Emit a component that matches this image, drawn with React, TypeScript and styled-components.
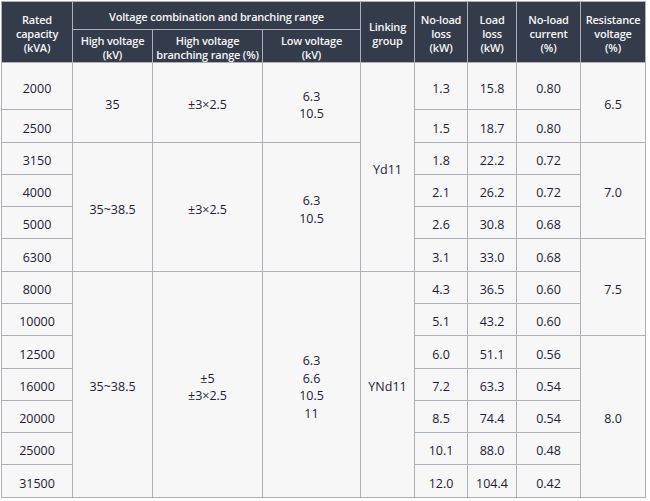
import React from "react";
import styled, { createGlobalStyle } from "styled-components";

const Global = createGlobalStyle`
  html, body { margin: 0; padding: 0; background: #ffffff; }
  body { font-family: "Open Sans", "Noto Sans", sans-serif; }
`;

const COLS = [70, 79, 109, 97, 53, 52, 48, 63, 64];
const ROWS = [27, 32, 46, 32, 31, 31, 31, 32, 31, 31, 32, 31, 31, 31, 32];

const Table = styled.div`
  display: grid;
  grid-template-columns: ${COLS.map((c) => `${c}px`).join(" ")};
  grid-template-rows: ${ROWS.map((r) => `${r}px`).join(" ")};
  gap: 1px;
  padding: 1px;
  margin: 1px;
  width: max-content;
  background: #aeb0b7;
`;

type Area = { r: number; c: number; rs?: number; cs?: number };

const Cell = styled.div<{ $r: number; $c: number; $rs: number; $cs: number }>`
  grid-row: ${(p) => p.$r} / span ${(p) => p.$rs};
  grid-column: ${(p) => p.$c} / span ${(p) => p.$cs};
  display: flex;
  flex-direction: column;
  align-items: center;
  justify-content: center;
  text-align: center;
  box-sizing: border-box;
`;

const HeadCell = styled(Cell)`
  background: #343c4b;
  color: #f4f5f7;
  font-size: 11px;
  font-weight: 600;
  line-height: 14px;
  letter-spacing: -0.2px;
  padding-top: 3px;
`;

const BodyCell = styled(Cell)`
  background: #f7f7f7;
  color: #1d2233;
  font-size: 12.5px;
  line-height: 17.5px;
  padding-top: 5px;
`;

const H = ({ r, c, rs = 1, cs = 1, children }: Area & { children: React.ReactNode }) => (
  <HeadCell $r={r} $c={c} $rs={rs} $cs={cs}>
    {children}
  </HeadCell>
);

const B = ({ r, c, rs = 1, cs = 1, lines }: Area & { lines: string[] }) => (
  <BodyCell $r={r} $c={c} $rs={rs} $cs={cs}>
    {lines.map((l, i) => (
      <span key={i}>{l}</span>
    ))}
  </BodyCell>
);

const rows: [string, string, string, string][] = [
  ["2000", "1.3", "15.8", "0.80"],
  ["2500", "1.5", "18.7", "0.80"],
  ["3150", "1.8", "22.2", "0.72"],
  ["4000", "2.1", "26.2", "0.72"],
  ["5000", "2.6", "30.8", "0.68"],
  ["6300", "3.1", "33.0", "0.68"],
  ["8000", "4.3", "36.5", "0.60"],
  ["10000", "5.1", "43.2", "0.60"],
  ["12500", "6.0", "51.1", "0.56"],
  ["16000", "7.2", "63.3", "0.54"],
  ["20000", "8.5", "74.4", "0.54"],
  ["25000", "10.1", "88.0", "0.48"],
  ["31500", "12.0", "104.4", "0.42"],
];

const merged: (Area & { lines: string[] })[] = [
  { r: 3, c: 2, rs: 2, lines: ["35"] },
  { r: 3, c: 3, rs: 2, lines: ["±3×2.5"] },
  { r: 3, c: 4, rs: 2, lines: ["6.3", "10.5"] },
  { r: 5, c: 2, rs: 4, lines: ["35~38.5"] },
  { r: 5, c: 3, rs: 4, lines: ["±3×2.5"] },
  { r: 5, c: 4, rs: 4, lines: ["6.3", "10.5"] },
  { r: 9, c: 2, rs: 7, lines: ["35~38.5"] },
  { r: 9, c: 3, rs: 7, lines: ["±5", "±3×2.5"] },
  { r: 9, c: 4, rs: 7, lines: ["6.3", "6.6", "10.5", "11"] },
  { r: 3, c: 5, rs: 6, lines: ["Yd11"] },
  { r: 9, c: 5, rs: 7, lines: ["YNd11"] },
  { r: 3, c: 9, rs: 2, lines: ["6.5"] },
  { r: 5, c: 9, rs: 3, lines: ["7.0"] },
  { r: 8, c: 9, rs: 3, lines: ["7.5"] },
  { r: 11, c: 9, rs: 5, lines: ["8.0"] },
];

export default function App() {
  return (
    <>
      <Global />
      <Table>
        <H r={1} c={1} rs={2}>
          <span>Rated</span>
          <span>capacity</span>
          <span>(kVA)</span>
        </H>
        <H r={1} c={2} cs={3}>
          <span>Voltage combination and branching range</span>
        </H>
        <H r={2} c={2}>
          <span>High voltage</span>
          <span>(kV)</span>
        </H>
        <H r={2} c={3}>
          <span>High voltage</span>
          <span>branching range (%)</span>
        </H>
        <H r={2} c={4}>
          <span>Low voltage</span>
          <span>(kV)</span>
        </H>
        <H r={1} c={5} rs={2}>
          <span>Linking</span>
          <span>group</span>
        </H>
        <H r={1} c={6} rs={2}>
          <span>No-load</span>
          <span>loss</span>
          <span>(kW)</span>
        </H>
        <H r={1} c={7} rs={2}>
          <span>Load</span>
          <span>loss</span>
          <span>(kW)</span>
        </H>
        <H r={1} c={8} rs={2}>
          <span>No-load</span>
          <span>current</span>
          <span>(%)</span>
        </H>
        <H r={1} c={9} rs={2}>
          <span>Resistance</span>
          <span>voltage</span>
          <span>(%)</span>
        </H>
        {rows.map((row, i) => (
          <React.Fragment key={row[0]}>
            <B r={i + 3} c={1} lines={[row[0]]} />
            <B r={i + 3} c={6} lines={[row[1]]} />
            <B r={i + 3} c={7} lines={[row[2]]} />
            <B r={i + 3} c={8} lines={[row[3]]} />
          </React.Fragment>
        ))}
        {merged.map((m, i) => (
          <B key={i} {...m} />
        ))}
      </Table>
    </>
  );
}
